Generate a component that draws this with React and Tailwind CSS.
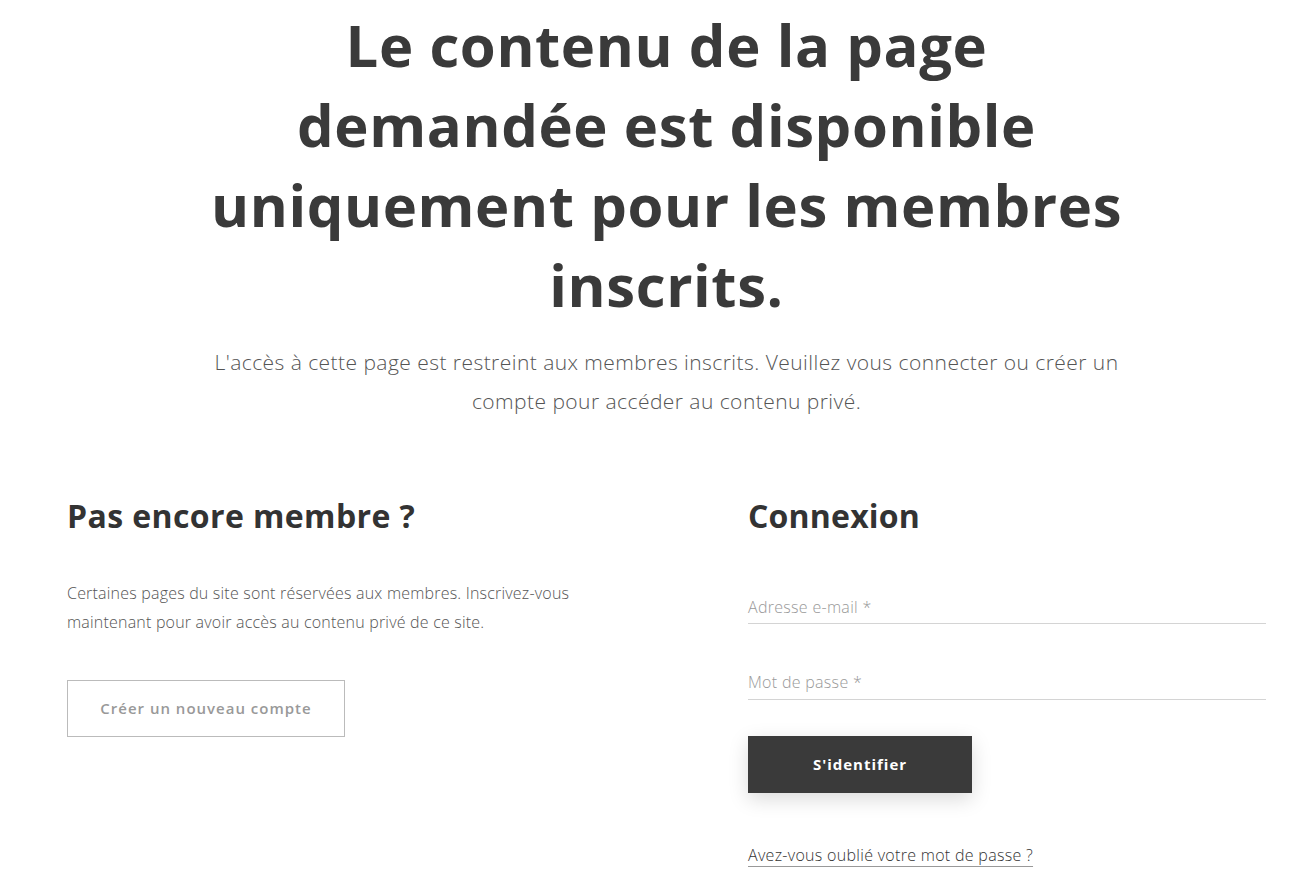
import React from 'react';

const body = { fontFamily: '"Open Sans", Lato, sans-serif' };

export default function App() {
  return (
    <div className="min-h-screen w-full bg-white text-[#3a3a3a]" style={body}>
      <div className="w-[1199px] ml-[67px] pt-[5px]">
        <h1 className="mx-auto max-w-[960px] text-center text-[58px] leading-[80px] font-bold tracking-[0.6px] text-[#3a3a3a]">
          Le contenu de la page demandée est disponible uniquement pour les membres inscrits.
        </h1>
        <p className="mx-auto mt-[18px] max-w-[920px] text-center text-[21px] leading-[39px] font-light tracking-[0.45px] text-[#555]">
          L'accès à cette page est restreint aux membres inscrits. Veuillez vous connecter ou créer un compte pour accéder au contenu privé.
        </p>

        <div className="mt-[75px] flex">
          <div className="w-[681px]">
            <h2 className="text-[32px] leading-[40px] font-bold tracking-[0.4px] text-[#333]">Pas encore membre ?</h2>
            <p className="mt-[43px] w-[520px] text-[16px] leading-[29px] font-light tracking-[0.2px] text-[#555]">
              Certaines pages du site sont réservées aux membres. Inscrivez-vous maintenant pour avoir accès au contenu privé de ce site.
            </p>
            <button className="mt-[43px] h-[57px] w-[278px] border border-[#bbb] text-[15px] font-semibold tracking-[1px] text-[#999]">
              Créer un nouveau compte
            </button>
          </div>

          <div className="flex-1">
            <h2 className="text-[32px] leading-[40px] font-bold tracking-[0.2px] text-[#333]">Connexion</h2>
            <div className="mt-[59px] border-b border-[#d4d4d4] pb-[4px] text-[16px] leading-[24px] font-light tracking-[0.3px] text-[#999]">Adresse e-mail *</div>
            <div className="mt-[46px] border-b border-[#d4d4d4] pb-[5px] text-[16px] leading-[24px] font-light tracking-[0.3px] text-[#999]">Mot de passe *</div>
            <button className="mt-[36px] h-[57px] w-[224px] bg-[#3a3a3a] text-[15px] font-bold tracking-[1px] text-white shadow-[0_6px_20px_rgba(0,0,0,0.15)]">
              S'identifier
            </button>
            <div className="mt-[50px]">
              <a href="#" className="text-[16px] leading-[24px] font-light tracking-[0.3px] text-[#333] underline decoration-[#999] underline-offset-[5px]">
                Avez-vous oublié votre mot de passe ?
              </a>
            </div>
          </div>
        </div>
      </div>
    </div>
  );
}
